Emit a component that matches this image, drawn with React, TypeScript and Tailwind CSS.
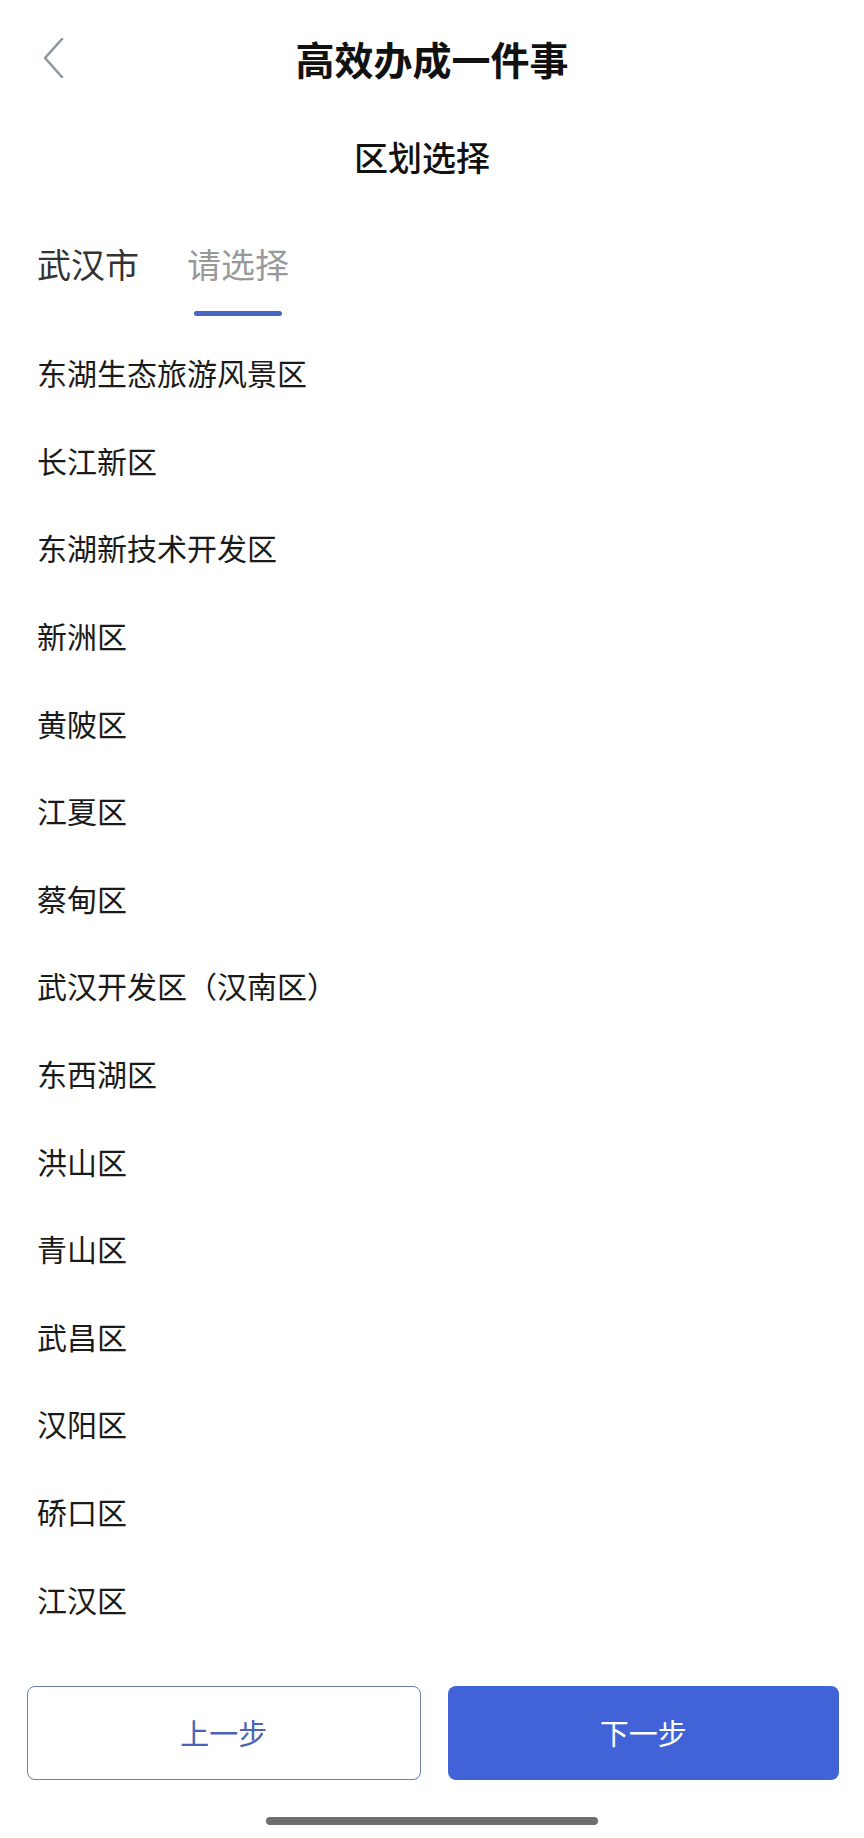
const districts = [
  "东湖生态旅游风景区",
  "长江新区",
  "东湖新技术开发区",
  "新洲区",
  "黄陂区",
  "江夏区",
  "蔡甸区",
  "武汉开发区（汉南区）",
  "东西湖区",
  "洪山区",
  "青山区",
  "武昌区",
  "汉阳区",
  "硚口区",
  "江汉区",
];

const font = { fontFamily: '"Noto Sans CJK SC", "Noto Sans", sans-serif' };

const App = () => {
  return (
    <div className="w-[864px] h-[1838px] bg-white flex flex-col" style={font}>
      {/* 顶部导航 */}
      <div className="h-[116px] grid grid-cols-[1fr_auto_1fr] items-center px-[42px]">
        <button className="w-[24px] h-[40px] flex items-center">
          <svg width="22" height="40" viewBox="0 0 22 40" fill="none">
            <polyline
              points="20,1 3,20 20,39"
              stroke="#8e969f"
              strokeWidth="2.6"
              strokeLinecap="round"
              strokeLinejoin="round"
            />
          </svg>
        </button>
        <h1 className="text-[39px] font-bold text-[#111111] leading-none">
          高效办成一件事
        </h1>
        <div />
      </div>

      <div className="h-[82px] flex items-center justify-center pr-[20px]">
        <h2 className="text-[34px] font-medium text-[#111111] leading-none">
          区划选择
        </h2>
      </div>

      {/* 选项卡 */}
      <div className="flex gap-[48px] px-[37px] pt-[46px]">
        <div className="flex flex-col items-center">
          <span className="h-[40px] leading-[40px] text-[34px] text-[#333333]">
            武汉市
          </span>
        </div>
        <div className="flex flex-col items-center">
          <span className="h-[40px] leading-[40px] text-[34px] text-[#999999]">
            请选择
          </span>
          <div className="mt-[27px] h-[5px] w-[88px] rounded-full bg-[#4a66c4]" />
        </div>
      </div>

      {/* 区划列表 */}
      <ul className="mt-[13px] px-[37px]">
        {districts.map((name) => (
          <li
            key={name}
            className="h-[87.6px] flex items-center text-[30px] text-[#1a1a1a]"
          >
            {name}
          </li>
        ))}
      </ul>

      {/* 底部按钮 */}
      <div className="mt-[43px] flex gap-[27px] pl-[27px] pr-[25px]">
        <button className="flex-1 h-[94px] rounded-[8px] border-[1.5px] border-[#6a7fa6] bg-white text-[29px] text-[#4a63b8]">
          上一步
        </button>
        <button className="flex-1 h-[94px] rounded-[8px] bg-[#4263d8] text-[29px] text-white">
          下一步
        </button>
      </div>

      <div className="mt-[37px] flex justify-center">
        <div className="w-[332px] h-[8px] rounded-full bg-[#6e6e6e]" />
      </div>
    </div>
  );
};

export default App;
